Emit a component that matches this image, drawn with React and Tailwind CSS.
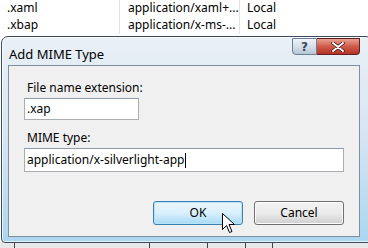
import React from 'react'

const font = { fontFamily: '"Noto Sans", "Open Sans", Arial, sans-serif' }

const rows = [
  { ext: '.xaml', mime: 'application/xaml+...', type: 'Local', h: 'h-[15px]' },
  { ext: '.xbap', mime: 'application/x-ms-...', type: 'Local', h: 'h-[19px]' },
]

function Cursor() {
  return (
    <svg width="13" height="21" viewBox="0 0 13 21" className="absolute left-[222px] top-[213px]">
      <path d="M0.5 0.5 L0.5 16.5 L4.5 12.5 L7.5 19.5 L10 18.5 L7 11.5 L12.5 11.5 Z" fill="#fff" stroke="#000" strokeWidth="1" strokeLinejoin="round" />
    </svg>
  )
}

export default function App() {
  return (
    <div className="relative w-[368px] h-[248px] overflow-hidden bg-white text-[12px] text-black" style={font}>
      {/* list behind dialog */}
      <div>
        {rows.map(r => (
          <div key={r.ext} className={`flex ${r.h} items-center`}>
            <div className="w-[120px] pl-[7px] border-r border-[#e2e2e2] h-full flex items-center">{r.ext}</div>
            <div className="w-[120px] pl-[8px] border-r border-[#e2e2e2] h-full flex items-center">{r.mime}</div>
            <div className="flex-1 pl-[7px]">{r.type}</div>
          </div>
        ))}
      </div>

      {/* dialog */}
      <div className="absolute left-[1px] top-[36px] w-[372px] h-[207px] rounded-t-[7px] rounded-b-[4px] border border-[#3b4c5e] bg-gradient-to-b from-[#eaf0f6] via-[#d6e4f2] to-[#abd6ee] shadow-[inset_0_0_0_1px_rgba(255,255,255,0.7)]">
        <div className="flex h-[28px] items-start">
          <div className="pl-[7px] pt-[8px] text-[13px] leading-[18px] text-black">Add MIME Type</div>
          <div className="ml-auto mr-[12px] mt-[1px] flex">
            <div className="flex h-[17px] w-[25px] items-center justify-center rounded-bl-[4px] border border-[#6d7f93] bg-gradient-to-b from-[#eef3f8] via-[#d6dfe9] to-[#b7c6d6] text-[12px] font-bold leading-none text-[#33475c]" style={{ fontFamily: '"DejaVu Sans", sans-serif' }}>?</div>
            <div className="flex h-[17px] w-[43px] items-center justify-center rounded-br-[4px] border border-l-0 border-[#5e2120] bg-gradient-to-b from-[#e8a093] via-[#cf5a4a] to-[#b43226]">
              <svg width="14" height="10" viewBox="0 0 14 10">
                <path d="M2 1 L12 9 M12 1 L2 9" stroke="#3a1010" strokeWidth="3.4" strokeLinecap="round" />
                <path d="M2 1 L12 9 M12 1 L2 9" stroke="#fff" strokeWidth="2" strokeLinecap="round" />
              </svg>
            </div>
          </div>
        </div>

        <div className="ml-[6px] w-[352px] h-[172px] border border-[#7f8fa0] bg-[#f0f0f0] pl-[15px] pr-[15px]">
          <div className="mt-[14px] pl-[3px] leading-[16px]">File name extension:</div>
          <div className="mt-[2px] w-[115px] h-[22px] border border-[#abadb3] border-t-[#8e9bab] bg-white pl-[2px] leading-[20px]">.xap</div>
          <div className="mt-[10px] pl-[3px] leading-[16px]">MIME type:</div>
          <div className="mt-[2px] w-[320px] h-[24px] border border-[#abadb3] border-t-[#8e9bab] bg-white pl-[2px] leading-[22px] flex items-center">
            <span>application/x-silverlight-app</span>
            <span className="ml-[1px] inline-block w-[1px] h-[15px] bg-black" />
          </div>
          <div className="mt-[29px] flex justify-end gap-[11px]">
            <div className="flex h-[24px] w-[90px] items-center justify-center rounded-[3px] border border-[#3c7fb1] bg-gradient-to-b from-[#eaf6fd] via-[#d9f0fc] to-[#a7d9f5] shadow-[inset_0_0_0_1px_#b7e3f9]">OK</div>
            <div className="flex h-[24px] w-[90px] items-center justify-center rounded-[3px] border border-[#707070] bg-gradient-to-b from-[#f2f2f2] via-[#ebebeb] to-[#cfcfcf] shadow-[inset_0_0_0_1px_#fcfcfc]">Cancel</div>
          </div>
        </div>
      </div>

      {/* strip below dialog */}
      <div className="absolute left-0 top-[243px] flex h-[5px] w-[368px] bg-[#e8e8ea]">
        <div className="w-[15px] border-r border-[#444]" />
        <div className="w-[135px] border-r border-[#444]" />
        <div className="w-[58px] border-r border-[#444]" />
        <div className="w-[38px] border-r border-[#444]" />
        <div className="w-[27px] border-r border-[#444]" />
      </div>

      <Cursor />
    </div>
  )
}
